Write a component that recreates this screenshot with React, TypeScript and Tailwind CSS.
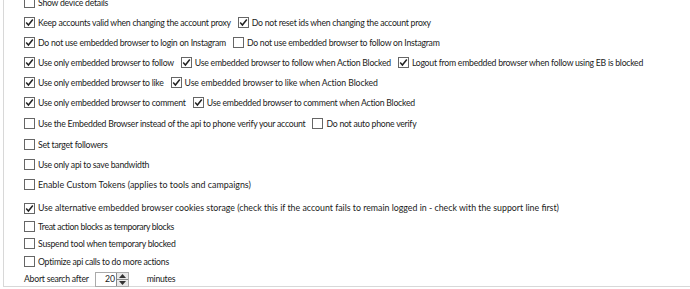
import React from "react";

const Box = ({ checked }: { checked?: boolean }) => (
  <span className="inline-flex items-center justify-center w-[11px] h-[11px] border border-[#666] bg-white shrink-0 mr-[3px]">
    {checked && (
      <svg width="9" height="9" viewBox="0 0 9 9">
        <path d="M1.2 4.6 L3.4 7 L7.8 1.5" fill="none" stroke="#222" strokeWidth="1.5" />
      </svg>
    )}
  </span>
);

const Item = ({ checked, label, tx = "" }: { checked?: boolean; label: string; tx?: string }) => (
  <span className="inline-flex items-center mr-[7px]">
    <Box checked={checked} />
    <span className={`whitespace-nowrap ${tx}`}>{label}</span>
  </span>
);

const Row = ({ children, h }: { children: React.ReactNode; h: string }) => (
  <div className={`flex items-center pl-[20px] ${h}`}>{children}</div>
);

export default function App() {
  return (
    <div
      className="w-[690px] h-[289px] bg-white overflow-hidden text-[8.7px] tracking-[-0.25px] text-[#1b1b1b]"
      style={{ fontFamily: 'Lato, "Noto Sans", sans-serif' }}
    >
      <div className="ml-[3px] h-[294px] border-l border-b border-[#d8d8d8] -mt-[7px] pt-0">
        <Row h="h-[20px]"><Item label="Show device details" /></Row>
        <Row h="h-[20px]">
          <Item checked label="Keep accounts valid when changing the account proxy" />
          <Item checked label="Do not reset ids when changing the account proxy" />
        </Row>
        <Row h="h-[20px]">
          <Item checked label="Do not use embedded browser to login on Instagram" />
          <Item label="Do not use embedded browser to follow on Instagram" />
        </Row>
        <Row h="h-[20px]">
          <Item checked label="Use only embedded browser to follow" />
          <Item checked label="Use embedded browser to follow when Action Blocked" />
          <Item checked label="Logout from embedded browser when follow using EB is blocked" />
        </Row>
        <Row h="h-[20px]">
          <Item checked label="Use only embedded browser to like" />
          <Item checked label="Use embedded browser to like when Action Blocked" tx="tracking-[-0.1px]" />
        </Row>
        <Row h="h-[20px]">
          <Item checked label="Use only embedded browser to comment" />
          <Item checked label="Use embedded browser to comment when Action Blocked" />
        </Row>
        <Row h="h-[21px]">
          <Item label="Use the Embedded Browser instead of the api to phone verify your account" />
          <Item label="Do not auto phone verify" />
        </Row>
        <Row h="h-[21px]"><Item label="Set target followers" /></Row>
        <Row h="h-[20px]"><Item label="Use only api to save bandwidth" /></Row>
        <Row h="h-[20px]"><Item label="Enable Custom Tokens (applies to tools and campaigns)" tx="text-[8.9px] tracking-normal" /></Row>
        <div className="h-[3px]" />
        <Row h="h-[20px]">
          <Item checked label="Use alternative embedded browser cookies storage (check this if the account fails to remain logged in - check with the support line first)" tx="text-[8.8px] tracking-normal" />
        </Row>
        <Row h="h-[17px]"><Item label="Treat action blocks as temporary blocks" tx="tracking-[-0.35px]" /></Row>
        <Row h="h-[18px]"><Item label="Suspend tool when temporary blocked" /></Row>
        <Row h="h-[17px]"><Item label="Optimize api calls to do more actions" /></Row>
        <div className="flex items-center pl-[20px] h-[18px]">
          <span className="whitespace-nowrap">Abort search after</span>
          <span className="ml-[6px] inline-flex items-center w-[34px] h-[15px] border border-[#aaa] bg-white">
            <span className="flex-1 text-right pr-[1px] leading-none">20</span>
            <span className="flex flex-col w-[12px] h-[13px] border-l border-[#888]">
              <span className="flex-1 flex items-center justify-center bg-[#e8e8e8] border-b border-[#888]">
                <svg width="7" height="4" viewBox="0 0 7 4"><path d="M0 4 L3.5 0 L7 4 Z" fill="#333" /></svg>
              </span>
              <span className="flex-1 flex items-center justify-center bg-[#e8e8e8]">
                <svg width="7" height="4" viewBox="0 0 7 4"><path d="M0 0 L3.5 4 L7 0 Z" fill="#333" /></svg>
              </span>
            </span>
          </span>
          <span className="ml-[18px]">minutes</span>
        </div>
      </div>
    </div>
  );
}
